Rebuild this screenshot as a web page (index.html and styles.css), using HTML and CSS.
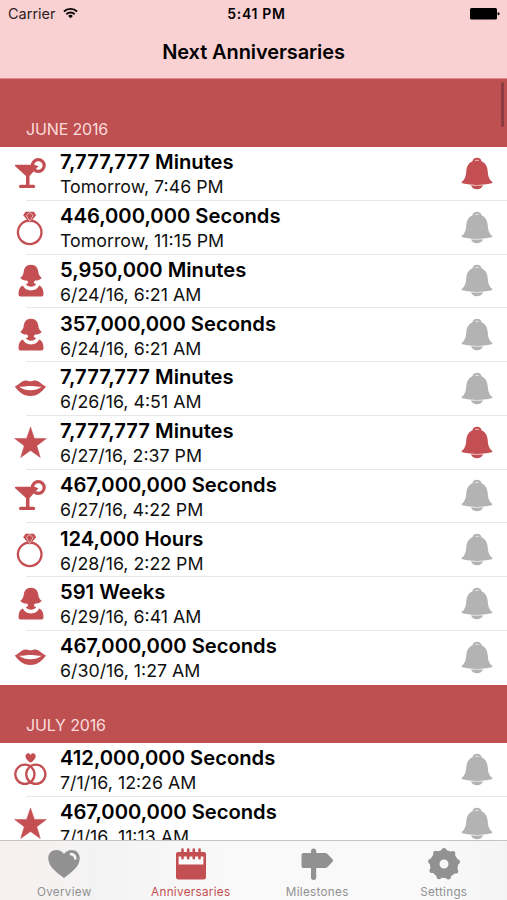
FILE: index.html
```html
<!DOCTYPE html>
<html lang="en">
<head>
    <meta charset="utf-8">
    <title>Next Anniversaries</title>
    <link rel="stylesheet" href="styles.css">
</head>
<body>
<svg class="sprites">
    <symbol id="cocktail" viewBox="0 0 32 32">
        <path d="M1.500 6.700h19l4 1.500-9 9.800v8.800h4q1.700 0 1.700 1.600t-1.700 1.600h-13Q5 30 5 28.400t1.500-1.600h5.500V18L1.200 8.200Q.5 6.700 1.500 6.700z"/>
        <circle cx="24.300" cy="7.500" r="5.900" fill="none" stroke="currentColor" stroke-width="3.200"/>
    </symbol>
    <symbol id="ring" viewBox="0 0 32 32">
        <circle cx="15.700" cy="20.300" r="11.800" fill="none" stroke="currentColor" stroke-width="2.300"/>
        <path d="M11.500-.2h8.500l2.200 3.400-6.500 7.500-6.500-7.500z"/>
        <path d="M12.200 3.400l3.500 6 3.500-6M12.500 3.200L15.700.6l3.200 2.600" fill="none" stroke="#fff" stroke-width=".6"/>
    </symbol>
    <symbol id="woman" viewBox="0 0 32 32">
        <path d="M17-.3c4.800 0 6.800 3.300 7.300 7 .3 2.800 1.300 4.800 3.500 6-1.500 2.200-4 2.800-6.500 2.800-1 .8-1.300 1-1.400 1.800 0 1 1 1.500 2.300 1.800-1 1.800-3 2.700-5.200 2.700s-4.200-.9-5.200-2.700c1.300-.3 2.300-.8 2.300-1.800-.1-.8-.4-1-1.400-1.800-2.500 0-5-.6-6.500-2.800 2.200-1.200 3.200-3.200 3.500-6 .5-3.700 2.500-7 7.300-7z"/>
        <path d="M8.800 20.600c1.500 3.200 4.400 4.900 8.200 4.900s6.700-1.700 8.200-4.900c3.200 1.400 4.300 4.400 4.300 8.900q0 2-2 2h-21q-2 0-2-2c0-4.500 1.100-7.500 4.300-8.900z"/>
    </symbol>
    <symbol id="lips" viewBox="0 0 32 32">
        <path d="M.8 13.500c4-1.500 6.700-6 10.800-6 2 0 3 .8 4.800.8s2.800-.8 4.800-.8c4.100 0 6.800 4.500 10.800 6-3.500 4.500-8 9.500-15.600 9.500S4.300 18 .8 13.500z"/>
        <path d="M5 13.700c4 .5 7-1.300 11.400-.6 4.400-.7 7.400 1.100 11.400.6-6.500 4.800-16.300 4.800-22.800 0z" fill="#fff"/>
    </symbol>
    <symbol id="star" viewBox="0 0 32 32">
        <path d="M16.500 0l3.900 11.400 12 .1-9.600 7.300 3.500 11.700-9.800-6.900-9.800 6.900L10.200 18.800.6 11.500l12-.1z" stroke="currentColor" stroke-width=".5" stroke-linejoin="round"/>
    </symbol>
    <symbol id="rings" viewBox="0 0 32 32">
        <path d="M16.600 8.800C13.500 6.500 11.500 4.500 11.500 2.200c0-3.500 4-3.800 5.100-1.200 1.100-2.600 5.100-2.300 5.100 1.200 0 2.300-2 4.300-5.100 6.600z"/>
        <g fill="none" stroke="currentColor" stroke-width="2.300">
            <circle cx="10.900" cy="20.300" r="9.600"/>
            <circle cx="21.800" cy="20.300" r="9.600"/>
        </g>
    </symbol>
    <symbol id="bell" viewBox="0 0 32 34">
        <path d="M11.500 4.500a4.500 3.800 0 0 1 9 0h-2.200a2.300 1.800 0 0 0-4.600 0z"/>
        <path d="M16 3.500c7 0 10.200 4.500 10.700 10.500.4 5.500 1.500 8.500 4.500 10.800.6.500.2 1.300-.6 1.500C20.500 28.600 11.500 28.600 1.400 26.300c-.8-.2-1.200-1-.6-1.500 3-2.300 4.100-5.300 4.500-10.800C5.800 8 9 3.500 16 3.500z"/>
        <path d="M10 28.300q6 .6 12 0c-.8 2.700-3.200 4-6 4s-5.200-1.300-6-4z"/>
    </symbol>
    <symbol id="heart" viewBox="0 0 34 32">
        <path d="M17 31C6 22.500.3 17.500.3 9.800.3 4.500 4 1 8.800 1 12.500 1 15.500 3 17 5.500 18.500 3 21.500 1 25.200 1c4.800 0 8.500 3.500 8.500 8.800C33.700 17.500 28 22.500 17 31z"/>
        <path d="M24.500 5.500c2.600.3 4.300 2 4.500 4.500" fill="none" stroke="#f5f5f5" stroke-width="2.800" stroke-linecap="round"/>
    </symbol>
    <symbol id="calendar" viewBox="0 0 32 32">
        <path d="M3 4h26q2 0 2 2v23q0 2.500-2.500 2.500h-25Q1 31.500 1 29V6q0-2 2-2z"/>
        <path d="M3.600 8.500h24.800v8H3.600z" fill="#fafafa"/>
        <path d="M7.500 1.500v8.800M13.200 1.500v8.800M18.800 1.500v8.800M24.500 1.500v8.800" stroke="currentColor" stroke-width="2.600" stroke-linecap="round"/>
    </symbol>
    <symbol id="signpost" viewBox="0 0 32 32">
        <path d="M10 5V3.200a2.600 2.600 0 0 1 5.200 0V5H24q1.500 0 2.500 1l5 5.200q1.300 1.300 0 2.600l-5 5.200q-1 1-2.500 1h-8.800v9.300a2.600 2.600 0 0 1-5.200 0V20H2.500Q.5 20 .5 18V7q0-2 2-2z"/>
    </symbol>
    <symbol id="gear" viewBox="0 0 32 32">
        <circle cx="16" cy="16" r="9.300" fill="none" stroke="currentColor" stroke-width="9.600"/>
        <circle cx="16" cy="16" r="13.500" fill="none" stroke="currentColor" stroke-width="5.200" stroke-linecap="round" stroke-dasharray="0 9.425" transform="rotate(-90 16 16)"/>
    </symbol>
</svg>

<header>
    <div class="status">
        <span class="carrier">Carrier
            <svg class="wifi" viewBox="0 0 16 12">
                <g fill="none" stroke="currentColor" stroke-width="2">
                    <path d="M1 4.400a10 10 0 0 1 14 0"/>
                    <path d="M3.600 7.300a6.300 6.300 0 0 1 8.800 0"/>
                </g>
                <path d="M8 11.600L5.500 9.200a3.600 3.600 0 0 1 5 0z" fill="currentColor"/>
            </svg>
        </span>
        <span class="time">5:41 PM</span>
        <svg class="battery" viewBox="0 0 30 12">
            <rect width="27" height="11.500" rx="1.500"/>
            <path d="M27.700 4q2 .5 2 1.800t-2 1.800z"/>
        </svg>
    </div>
    <h1>Next Anniversaries</h1>
</header>

<main>
    <div class="scrollbar"></div>
    <h2 class="first">JUNE 2016</h2>
    <ul>
        <li>
            <svg class="icon"><use href="#cocktail"/></svg>
            <div class="item"><h3>7,777,777 Minutes</h3><p>Tomorrow, 7:46 PM</p></div>
            <svg class="bell active"><use href="#bell"/></svg>
        </li>
        <li>
            <svg class="icon"><use href="#ring"/></svg>
            <div class="item"><h3>446,000,000 Seconds</h3><p>Tomorrow, 11:15 PM</p></div>
            <svg class="bell"><use href="#bell"/></svg>
        </li>
        <li>
            <svg class="icon"><use href="#woman"/></svg>
            <div class="item"><h3>5,950,000 Minutes</h3><p>6/24/16, 6:21 AM</p></div>
            <svg class="bell"><use href="#bell"/></svg>
        </li>
        <li>
            <svg class="icon"><use href="#woman"/></svg>
            <div class="item"><h3>357,000,000 Seconds</h3><p>6/24/16, 6:21 AM</p></div>
            <svg class="bell"><use href="#bell"/></svg>
        </li>
        <li>
            <svg class="icon"><use href="#lips"/></svg>
            <div class="item"><h3>7,777,777 Minutes</h3><p>6/26/16, 4:51 AM</p></div>
            <svg class="bell"><use href="#bell"/></svg>
        </li>
        <li>
            <svg class="icon"><use href="#star"/></svg>
            <div class="item"><h3>7,777,777 Minutes</h3><p>6/27/16, 2:37 PM</p></div>
            <svg class="bell active"><use href="#bell"/></svg>
        </li>
        <li>
            <svg class="icon"><use href="#cocktail"/></svg>
            <div class="item"><h3>467,000,000 Seconds</h3><p>6/27/16, 4:22 PM</p></div>
            <svg class="bell"><use href="#bell"/></svg>
        </li>
        <li>
            <svg class="icon"><use href="#ring"/></svg>
            <div class="item"><h3>124,000 Hours</h3><p>6/28/16, 2:22 PM</p></div>
            <svg class="bell"><use href="#bell"/></svg>
        </li>
        <li>
            <svg class="icon"><use href="#woman"/></svg>
            <div class="item"><h3>591 Weeks</h3><p>6/29/16, 6:41 AM</p></div>
            <svg class="bell"><use href="#bell"/></svg>
        </li>
        <li>
            <svg class="icon"><use href="#lips"/></svg>
            <div class="item"><h3>467,000,000 Seconds</h3><p>6/30/16, 1:27 AM</p></div>
            <svg class="bell"><use href="#bell"/></svg>
        </li>
    </ul>
    <h2>JULY 2016</h2>
    <ul>
        <li>
            <svg class="icon"><use href="#rings"/></svg>
            <div class="item"><h3>412,000,000 Seconds</h3><p>7/1/16, 12:26 AM</p></div>
            <svg class="bell"><use href="#bell"/></svg>
        </li>
        <li>
            <svg class="icon"><use href="#star"/></svg>
            <div class="item"><h3>467,000,000 Seconds</h3><p>7/1/16, 11:13 AM</p></div>
            <svg class="bell"><use href="#bell"/></svg>
        </li>
    </ul>
</main>

<nav>
    <a><svg><use href="#heart"/></svg>Overview</a>
    <a class="active"><svg><use href="#calendar"/></svg>Anniversaries</a>
    <a><svg><use href="#signpost"/></svg>Milestones</a>
    <a><svg><use href="#gear"/></svg>Settings</a>
</nav>
</body>
</html>
```

FILE: styles.css
```css
*{
    box-sizing: border-box;
}
body{
    margin: 0;
    height: 900px;
    display: flex;
    flex-direction: column;
    overflow: hidden;
    background: #fff;
    color: #000;
    font-family: Inter, "Liberation Sans", sans-serif;
}
h1, h2, h3, p, ul{
    margin: 0;
    padding: 0;
}
svg{
    fill: currentColor;
    flex: none;
    overflow: visible;
}
symbol{
    overflow: visible;
}
.sprites{
    position: absolute;
    width: 0;
    height: 0;
}
header{
    flex: none;
    height: 79px;
    background-color: #fad1d2;
    border-bottom: 1px solid #d9898c;
}
.status{
    display: grid;
    grid-template-columns: 1fr auto 1fr;
    align-items: center;
    height: 27px;
    padding: 0 7px 0 8px;
    font-size: 14.5px;
}
.carrier{
    display: flex;
    align-items: center;
    gap: 7px;
    color: #2b2223;
}
.wifi{
    width: 15px;
    height: 12px;
    color: #000;
    margin-top: -2px;
}
.time{
    font-size: 14px;
    font-weight: 600;
    letter-spacing: 0.7px;
    padding-left: 5px;
}
.battery{
    width: 30px;
    height: 12px;
    justify-self: end;
}
h1{
    font-size: 20px;
    font-weight: 600;
    line-height: 51px;
    letter-spacing: -0.1px;
    text-align: center;
}
main{
    flex: 1;
    min-height: 0;
    overflow: hidden;
    position: relative;
}
.scrollbar{
    position: absolute;
    top: 3px;
    right: 3px;
    width: 3px;
    height: 45px;
    border-radius: 2px;
    background-color: #8b3c40;
}
h2{
    display: flex;
    align-items: flex-end;
    height: 58.5px;
    padding: 0 0 8px 26px;
    background-color: #be5052;
    color: #fbdcdc;
    font-size: 16px;
    line-height: 20px;
    letter-spacing: -0.15px;
    font-weight: 400;
}
h2.first{
    height: 68px;
}
ul{
    list-style: none;
}
li{
    display: flex;
    align-items: center;
    height: 53.75px;
    padding: 0 14px;
    background: linear-gradient(#e6e6e6, #e6e6e6) 26px 100% / 100% 1px no-repeat;
}
li:last-child{
    background: none;
}
.icon{
    width: 32px;
    height: 32px;
    color: #c44f52;
}
.item{
    flex: 1;
    margin-left: 14px;
    padding-top: 1px;
}
h3{
    font-size: 20.2px;
    line-height: 26px;
    font-weight: 600;
}
p{
    font-size: 17.8px;
    line-height: 24px;
    color: #111;
}
.bell{
    width: 32px;
    height: 34px;
    color: #b3b3b3;
}
.bell.active{
    color: #c44f52;
}
nav{
    flex: none;
    display: grid;
    grid-template-columns: repeat(4, 1fr);
    height: 60.5px;
    padding-left: 1px;
    border-top: 1px solid #c4c4c4;
    background: linear-gradient(90deg, #f8f0f0, #f3f3f3 20%, #f9f9f9 45%, #f9f9f9 85%, #f4f4f4);
}
nav a{
    display: flex;
    flex-direction: column;
    align-items: center;
    padding-top: 7px;
    color: #919191;
    font-size: 11.7px;
    line-height: 15px;
    letter-spacing: 0.3px;
}
nav svg{
    width: 32px;
    height: 32px;
    margin-bottom: 5px;
}
nav .active{
    color: #c44f52;
}
```
